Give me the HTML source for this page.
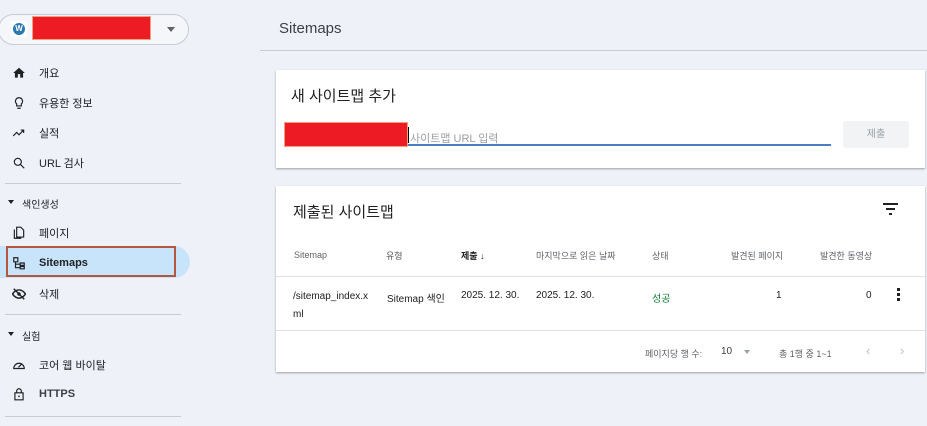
<!DOCTYPE html>
<html><head><meta charset="utf-8"><style>
*{box-sizing:border-box;margin:0;padding:0}
body{width:927px;height:426px;overflow:hidden;background:#eef2f8;font-family:"Liberation Sans","Noto Sans CJK KR",sans-serif;color:#202124;position:relative}
.a{position:absolute}
.nav{position:absolute;left:12px;font-size:11px;color:#202124;display:flex;align-items:center}
.nav svg{width:14px;height:14px;margin-right:13px}
.div{position:absolute;left:5px;width:176px;height:1px;background:#c8ccd2}
.card{position:absolute;left:276px;right:2px;background:#fff;box-shadow:0 1px 2px rgba(0,0,0,.35)}
.th{position:absolute;top:249px;font-size:9px;color:#5f6368}
.td{position:absolute;font-size:10px;color:#202124}
</style></head><body>
<div class="a" style="left:-2px;top:14px;width:191px;height:31px;border:1px solid #c8ccd2;border-radius:16px;background:#f4f6fa"></div>
<div class="a" style="left:11px;top:21px;width:16px;height:16px;background:#fff;border-radius:2px"></div>
<div class="a" style="left:13px;top:23px;width:12px;height:12px;border-radius:50%;background:#2a7ab0;color:#fff;font-size:8px;text-align:center;line-height:12px;font-weight:bold">W</div>
<div class="a" style="left:32px;top:16px;width:119px;height:24px;background:#ed1c24;border:1px solid #f5a07a"></div>
<div class="a" style="left:167px;top:27px;border:4px solid transparent;border-top:5px solid #5f6368"></div>

<div class="nav" style="top:65px"><svg viewBox="0 0 24 24"><path d="M10 20v-6h4v6h5v-8h3L12 3 2 12h3v8z" fill="#202124"/></svg>개요</div>
<div class="nav" style="top:95px"><svg viewBox="0 0 24 24"><path d="M9 21h6M12 3a6 6 0 0 0-4 10.5V17h8v-3.5A6 6 0 0 0 12 3z" fill="none" stroke="#202124" stroke-width="2"/></svg>유용한 정보</div>
<div class="nav" style="top:125px"><svg viewBox="0 0 24 24"><path d="M2 17l6-6 4 4 8-8M15 7h5v5" fill="none" stroke="#202124" stroke-width="2"/></svg>실적</div>
<div class="nav" style="top:155px"><svg viewBox="0 0 24 24"><circle cx="10" cy="10" r="6" fill="none" stroke="#202124" stroke-width="2"/><path d="M14.5 14.5L21 21" stroke="#202124" stroke-width="2"/></svg>URL 검사</div>
<div class="div" style="top:183px"></div>
<div class="a" style="left:8px;top:200px;border:3px solid transparent;border-top:4px solid #202124"></div>
<div class="a" style="left:22px;top:196px;font-size:10px">색인생성</div>
<div class="nav" style="top:225px"><svg viewBox="0 0 24 24"><path d="M4 6v15h12M8 2h7l5 5v12H8z" fill="none" stroke="#202124" stroke-width="2"/></svg>페이지</div>
<div class="a" style="left:0;top:246px;width:190px;height:32px;background:#c8e4fb;border-radius:0 16px 16px 0"></div>
<div class="a" style="left:6px;top:246px;width:170px;height:31px;border:2px solid #b4573e"></div>
<div class="nav" style="top:256px;font-weight:bold"><svg viewBox="0 0 24 24"><path d="M3 3h7v7H3zM14 12h7v4h-7zM14 18h7v4h-7zM6 10v10h8M6 14h8" fill="none" stroke="#202124" stroke-width="2"/></svg>Sitemaps</div>
<div class="nav" style="top:286px"><svg viewBox="0 0 24 24"><path d="M1 12s4-7 11-7 11 7 11 7-4 7-11 7S1 12 1 12z" fill="none" stroke="#202124" stroke-width="2.5"/><circle cx="12" cy="12" r="3" fill="#202124"/><path d="M3 3l18 18" stroke="#202124" stroke-width="2.5"/></svg>삭제</div>
<div class="div" style="top:314px"></div>
<div class="a" style="left:8px;top:332px;border:3px solid transparent;border-top:4px solid #202124"></div>
<div class="a" style="left:22px;top:328px;font-size:10px">실험</div>
<div class="nav" style="top:357px"><svg viewBox="0 0 24 24"><path d="M3 18a9 9 0 1 1 18 0z" fill="none" stroke="#202124" stroke-width="2"/><path d="M11 16l5-5" stroke="#202124" stroke-width="2"/></svg>코어 웹 바이탈</div>
<div class="nav" style="top:387px;font-weight:bold;color:#3c4043"><svg viewBox="0 0 24 24"><rect x="5" y="10" width="14" height="12" fill="none" stroke="#202124" stroke-width="2"/><path d="M8 10V7a4 4 0 0 1 8 0v3" fill="none" stroke="#202124" stroke-width="2"/><circle cx="12" cy="16" r="1.5" fill="#202124"/></svg>HTTPS</div>
<div class="div" style="top:416px"></div>

<div class="a" style="left:279px;top:20px;font-size:15px;color:#3c4043">Sitemaps</div>
<div class="a" style="left:260px;top:50px;right:0;height:1px;background:#c8ccd2"></div>

<div class="card" style="top:70px;height:98px"></div>
<div class="a" style="left:291px;top:85px;font-size:15px">새 사이트맵 추가</div>
<div class="a" style="left:284px;top:122px;width:124px;height:25px;background:#ed1c24;border:1px solid #f5a07a"></div>
<div class="a" style="left:408px;top:127px;width:1px;height:16px;background:#000"></div>
<div class="a" style="left:410px;top:130px;font-size:11px;color:#9aa0a6">사이트맵 URL 입력</div>
<div class="a" style="left:408px;top:144px;width:423px;height:2px;background:#4a7fc4"></div>
<div class="a" style="left:843px;top:121px;width:66px;height:27px;background:#f1f3f4;border-radius:3px;font-size:10px;color:#9aa0a6;text-align:center;line-height:27px">제출</div>

<div class="card" style="top:186px;height:186px"></div>
<div class="a" style="left:293px;top:201px;font-size:15px">제출된 사이트맵</div>
<div class="a" style="left:883px;top:203px;width:15px;height:2px;background:#202124"></div>
<div class="a" style="left:886px;top:208px;width:9px;height:2px;background:#202124"></div>
<div class="a" style="left:889px;top:213px;width:3px;height:2px;background:#202124"></div>

<div class="th" style="left:294px;top:250px">Sitemap</div>
<div class="th" style="left:386px">유형</div>
<div class="th" style="left:461px;color:#202124;font-weight:bold">제출 <span style="font-weight:normal">↓</span></div>
<div class="th" style="left:536px">마지막으로 읽은 날짜</div>
<div class="th" style="left:652px">상태</div>
<div class="th" style="left:731px">발견된 페이지</div>
<div class="th" style="left:820px">발견한 동영상</div>
<div class="a" style="left:276px;top:276px;right:2px;height:1px;background:#e0e0e0"></div>
<div class="td" style="left:293px;top:288px;line-height:18px;width:80px">/sitemap_index.x<br>ml</div>
<div class="td" style="left:387px;top:290px">Sitemap 색인</div>
<div class="td" style="left:461px;top:290px">2025. 12. 30.</div>
<div class="td" style="left:536px;top:290px">2025. 12. 30.</div>
<div class="td" style="left:652px;top:290px;color:#188038">성공</div>
<div class="td" style="left:776px;top:290px">1</div>
<div class="td" style="left:866px;top:290px">0</div>
<div class="a" style="left:897px;top:288px;width:3px;height:3px;background:#202124;box-shadow:0 5px #202124,0 10px #202124"></div>
<div class="a" style="left:276px;top:330px;right:2px;height:1px;background:#e0e0e0"></div>
<div class="td" style="left:645px;top:347px;font-size:9px;color:#5f6368">페이지당 행 수:</div>
<div class="td" style="left:721px;top:346px;color:#3c4043">10</div>
<div class="a" style="left:744px;top:350px;border:3px solid transparent;border-top:4px solid #9aa0a6"></div>
<div class="td" style="left:779px;top:347px;font-size:9px;color:#5f6368">총 1행 중 1~1</div>
<div class="td" style="left:866px;top:343px;color:#bdc1c6;font-size:13px">‹</div>
<div class="td" style="left:900px;top:343px;color:#bdc1c6;font-size:13px">›</div>
</body></html>
